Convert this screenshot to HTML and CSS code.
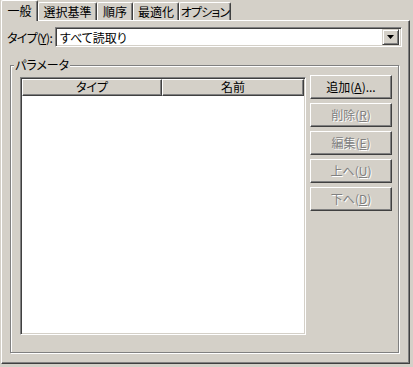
FILE: index.html
```html
<!DOCTYPE html>
<html lang="ja">
<head>
    <meta charset="UTF-8">
    <meta name="viewport" content="width=device-width, initial-scale=1.0">
    <title>プロパティ</title>
    <link rel="stylesheet" href="styles.css">
</head>
<body>
    <div class="tabs">
        <div class="tab tab-general active">一般</div>
        <div class="tab tab-criteria">選択基準</div>
        <div class="tab tab-order">順序</div>
        <div class="tab tab-optimize">最適化</div>
        <div class="tab tab-options">オプション</div>
    </div>
    <div class="page">
        <div class="type-row">
            <label class="type-label">タイプ(<u>Y</u>):</label>
            <div class="combo">
                <span class="combo-text">すべて読取り</span>
                <span class="combo-btn">
                    <svg width="7" height="4" viewBox="0 0 7 4"><polygon points="0,0 7,0 3.5,4" fill="#000"/></svg>
                </span>
            </div>
        </div>
        <div class="group">
            <div class="group-title">パラメータ</div>
            <div class="group-body">
                <div class="listview">
                    <div class="lv-header">
                        <div class="lv-col col-type">タイプ</div>
                        <div class="lv-col col-name">名前</div>
                    </div>
                </div>
                <div class="buttons">
                    <button class="btn">追加(<u>A</u>)...</button>
                    <button class="btn" disabled>削除(<u>R</u>)</button>
                    <button class="btn" disabled>編集(<u>E</u>)</button>
                    <button class="btn" disabled>上へ(<u>U</u>)</button>
                    <button class="btn" disabled>下へ(<u>D</u>)</button>
                </div>
            </div>
        </div>
    </div>
</body>
</html>
```

FILE: styles.css
```css
* {
    margin: 0;
    padding: 0;
    box-sizing: border-box;
}

body {
    width: 413px;
    height: 367px;
    background: #d4d0c8;
    font-family: "Noto Sans CJK JP", "Liberation Sans", sans-serif;
    font-size: 12px;
    font-feature-settings: "palt";
    color: #000;
    overflow: hidden;
}

/* tab strip */
.tabs {
    display: flex;
    align-items: flex-end;
    height: 20px;
    padding-left: 1px;
}

.tab {
    display: flex;
    justify-content: center;
    height: 18px;
    padding-top: 1px;
    border-top: 1px solid #fff;
    border-left: 1px solid #fff;
    border-right: 1px solid #404040;
    border-radius: 2px 2px 0 0;
    box-shadow: inset -1px 0 #808080;
    background: #d4d0c8;
    line-height: 15px;
    white-space: nowrap;
}

.tab.active {
    position: relative;
    z-index: 1;
    height: 21px;
    margin-bottom: -1px;
    padding-top: 2px;
}

.tab-general { width: 37px; }
.tab-criteria { width: 59px; }
.tab-order { width: 36px; }
.tab-optimize { width: 46px; }
.tab-options { width: 52px; letter-spacing: -0.8px; }

/* tab page */
.page {
    width: 409px;
    height: 344px;
    margin-left: 1px;
    border-top: 1px solid #fff;
    border-left: 1px solid #fff;
    border-right: 1px solid #404040;
    border-bottom: 1px solid #404040;
    box-shadow: inset -1px -1px #808080;
}

.type-row {
    display: flex;
    align-items: center;
    height: 20px;
    margin: 6px 7px 0 5px;
}

.type-label {
    flex: 0 0 48px;
    white-space: nowrap;
    letter-spacing: -0.7px;
}

.combo {
    flex: 1;
    display: flex;
    align-items: center;
    height: 20px;
    padding: 2px 2px 2px 4px;
    background: #fff;
    border: 1px solid;
    border-color: #808080 #fff #fff #808080;
    box-shadow: inset 1px 1px #404040, inset -1px -1px #d4d0c8;
}

.combo-btn {
    display: flex;
    align-items: center;
    justify-content: center;
    width: 17px;
    height: 16px;
    margin-left: auto;
    background: #d4d0c8;
    border: 1px solid;
    border-color: #d4d0c8 #404040 #404040 #d4d0c8;
    box-shadow: inset 1px 1px #fff, inset -1px -1px #808080;
}

.combo-btn svg {
    display: block;
}

/* group box */
.group {
    height: 288px;
    margin: 18px 10px 0 8px;
    border: 1px solid #808080;
    box-shadow: inset 1px 1px #fff, 1px 1px #fff;
}

.group-title {
    width: max-content;
    height: 14px;
    margin: -8px 0 0 3px;
    padding: 0 1px;
    background: #d4d0c8;
    line-height: 14px;
}

.group-body {
    display: flex;
    align-items: flex-start;
}

.listview {
    width: 286px;
    height: 258px;
    margin: 5px 0 0 9px;
    padding: 1px;
    background: #fff;
    border: 1px solid;
    border-color: #808080 #fff #fff #808080;
    box-shadow: inset 1px 1px #404040, inset -1px -1px #d4d0c8;
}

.lv-header {
    display: flex;
}

.lv-col {
    height: 17px;
    background: #d4d0c8;
    border-top: 1px solid #fff;
    border-left: 1px solid #fff;
    border-right: 1px solid #404040;
    border-bottom: 1px solid #404040;
    box-shadow: inset -1px -1px #808080;
    text-align: center;
    line-height: 14px;
}

.col-type { width: 140px; }
.col-name { width: 142px; }

.buttons {
    display: flex;
    flex-direction: column;
    gap: 4px;
    margin: 3px 0 0 4px;
}

.btn {
    width: 82px;
    height: 24px;
    font: inherit;
    font-feature-settings: "palt";
    color: #000;
    background: #d4d0c8;
    border-top: 1px solid #fff;
    border-left: 1px solid #fff;
    border-right: 1px solid #404040;
    border-bottom: 1px solid #404040;
    box-shadow: inset -1px -1px #808080;
    line-height: 20px;
}

.btn:disabled {
    color: #808080;
    text-shadow: 1px 1px #fff;
}
```
